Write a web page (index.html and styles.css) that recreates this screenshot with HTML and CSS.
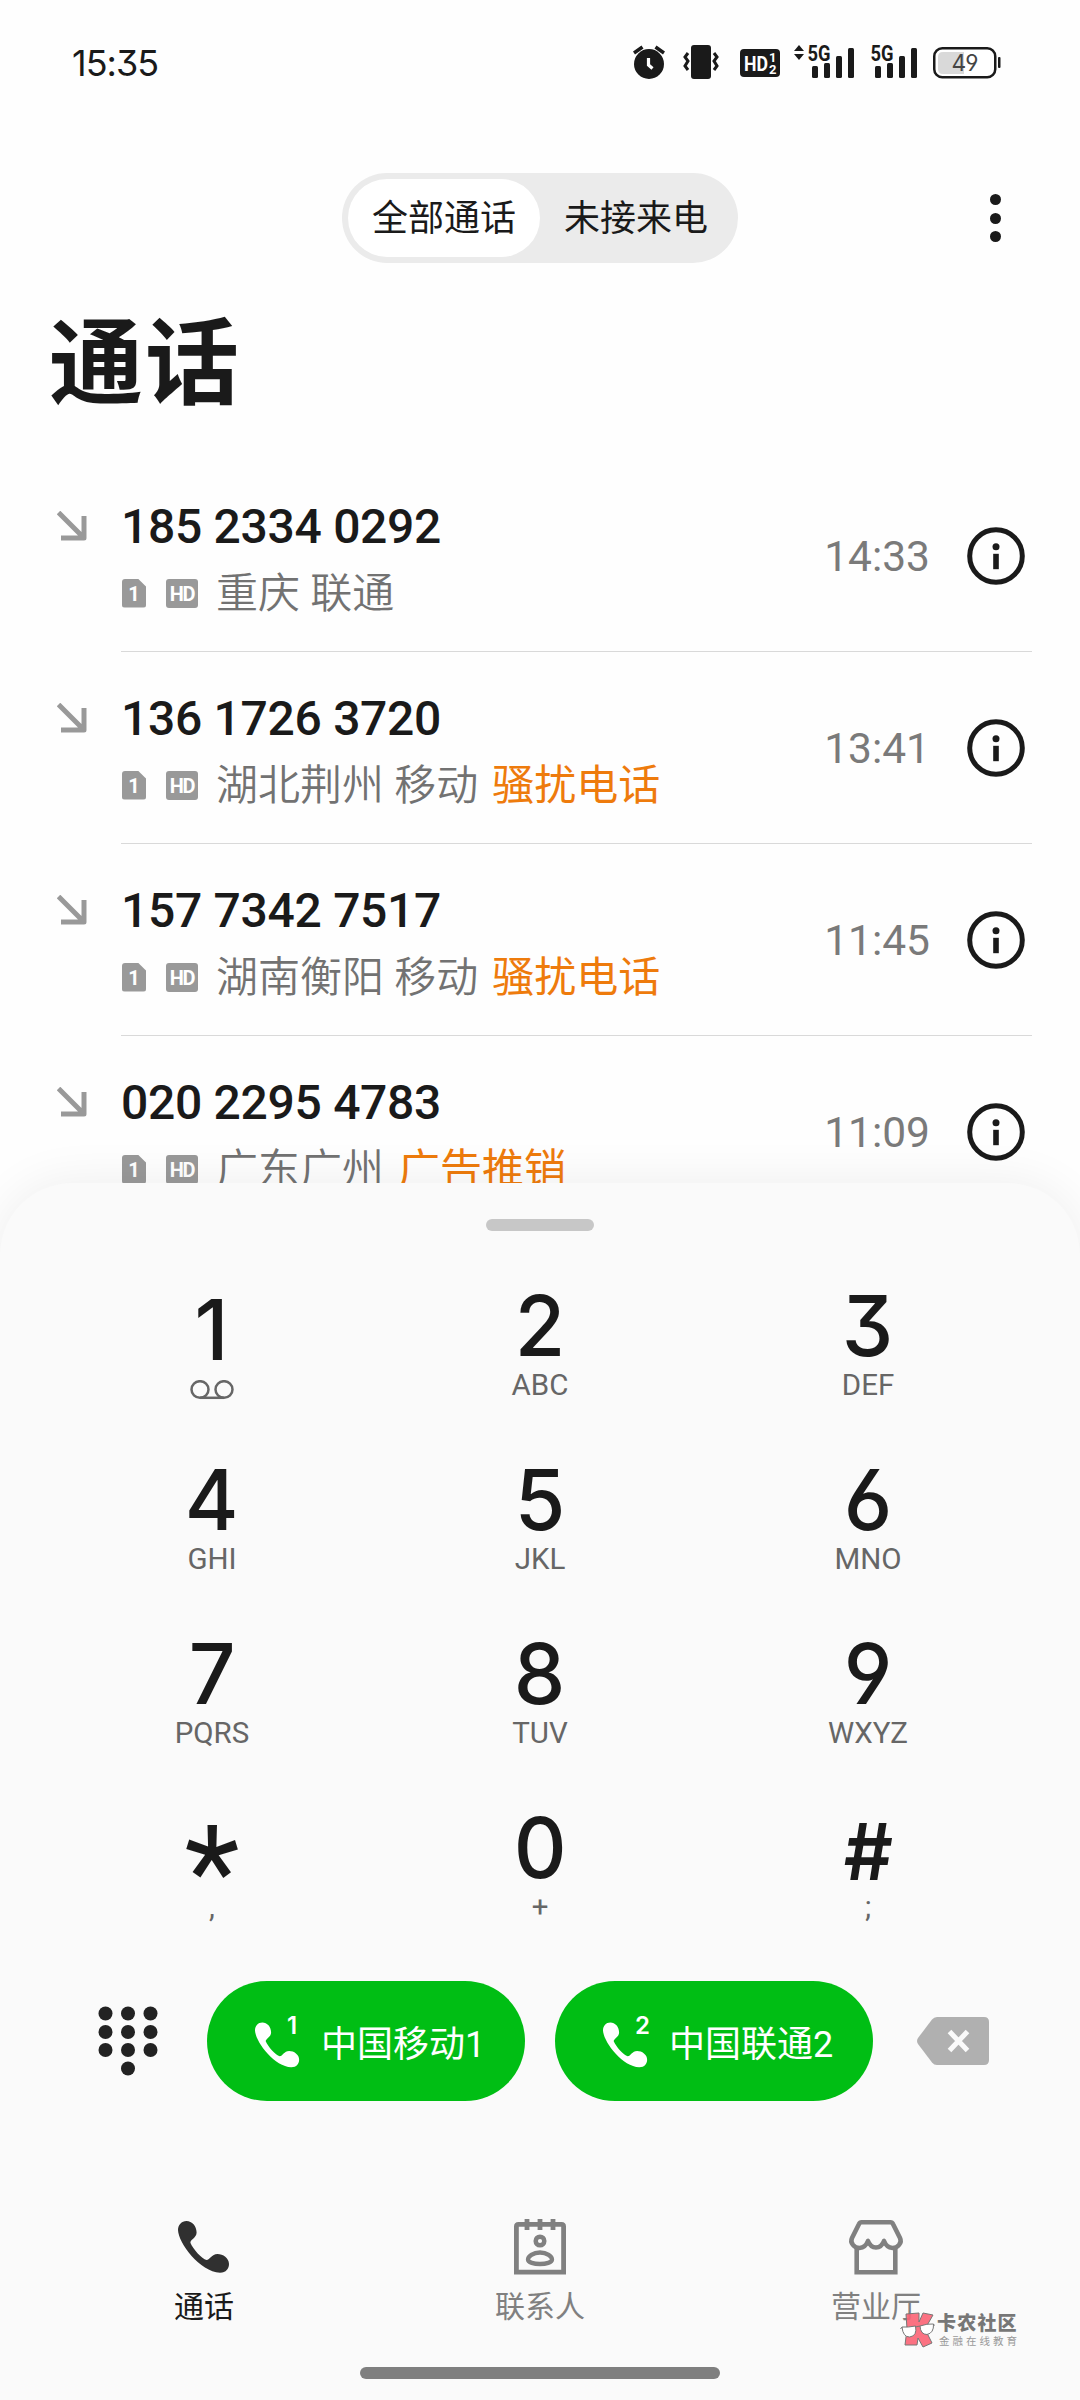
FILE: index.html
```html
<!DOCTYPE html>
<html lang="zh-CN">
<head>
    <meta charset="UTF-8">
    <meta name="viewport" content="width=device-width, initial-scale=1.0">
    <title>通话</title>
    <link rel="stylesheet" href="styles.css">
</head>
<body>
    <!-- Shared icons -->
    <svg width="0" height="0" class="defs">
        <symbol id="phone" viewBox="0 0 52 52">
            <path d="M8.500 0C3.500 0 0 4 0 9C.3 22 22 51 42 51.700C48 51.700 51 47.500 51 43C51 37 45 33 39.500 33C33.500 33 32 39 28.500 39C24 38 15 28 12.500 22C11.500 19 18.600 17 18.600 11.500C18.600 5 14 0 8.500 0Z"/>
        </symbol>
        <symbol id="incoming" viewBox="0 0 30 30">
            <path d="M1.500 1.500L26 26M27 5V27H4" fill="none" stroke="#999" stroke-width="5" stroke-linejoin="round"/>
        </symbol>
        <symbol id="info" viewBox="0 0 58 58">
            <circle cx="29" cy="29" r="26.300" fill="none" stroke="#1a1a1a" stroke-width="5"/>
            <circle cx="29" cy="19.800" r="3.500" fill="#1a1a1a"/>
            <rect x="26.200" y="26.800" width="5.600" height="15.400" fill="#1a1a1a"/>
        </symbol>
        <symbol id="bars" viewBox="0 0 46 34">
            <rect x="4" y="21" width="6" height="12" rx="1.500"/>
            <rect x="16" y="18" width="6" height="15" rx="1.500"/>
            <rect x="28" y="11" width="6" height="22" rx="1.500"/>
            <rect x="40" y="3" width="6" height="30" rx="1.500"/>
        </symbol>
    </svg>

    <div class="phone">
        <div class="status-bar">
            <span class="clock">15:35</span>
            <div class="status-icons">
                <svg class="alarm" width="32" height="34" viewBox="0 0 32 34">
                    <circle cx="16" cy="19" r="15"/>
                    <path d="M1 8L9.500 2M31 8L22.500 2" stroke="#1a1a1a" stroke-width="3.500"/>
                    <path d="M15.500 13V20L19.500 23.500" fill="none" stroke="#fff" stroke-width="3.200"/>
                </svg>
                <svg class="vibrate" width="36" height="34" viewBox="0 0 36 34">
                    <rect x="8" y="0" width="20" height="34" rx="3"/>
                    <path d="M5 8L2 12L5 16L2 21L5 25M31 8L34 12L31 16L34 21L31 25" fill="none" stroke="#1a1a1a" stroke-width="3"/>
                </svg>
                <svg class="volte" width="40" height="28" viewBox="0 0 40 28">
                    <rect width="40" height="28" rx="4"/>
                    <g fill="#fff" font-weight="700">
                        <text x="4" y="21.500" font-size="21" textLength="24" lengthAdjust="spacingAndGlyphs">HD</text>
                        <text x="29" y="13" font-size="13">1</text>
                        <text x="29" y="25" font-size="13">2</text>
                    </g>
                </svg>
                <svg class="updown" width="10" height="15" viewBox="0 0 10 15">
                    <path d="M0 6L5 0L10 6ZM0 9L5 15L10 9Z"/>
                </svg>
                <svg class="signal" width="46" height="34">
                    <text x="-0.500" y="16" font-size="22" font-weight="700" textLength="23" lengthAdjust="spacingAndGlyphs">5G</text>
                    <use href="#bars"/>
                </svg>
                <svg class="signal second" width="46" height="34">
                    <text x="-0.500" y="16" font-size="22" font-weight="700" textLength="23" lengthAdjust="spacingAndGlyphs">5G</text>
                    <use href="#bars"/>
                </svg>
                <svg class="battery" width="68" height="32" viewBox="0 0 68 32">
                    <rect x="1.250" y="1.250" width="61" height="29" rx="8" fill="#fff" stroke="#1a1a1a" stroke-width="2.500"/>
                    <path d="M10 5H31V27H10Q5 27 5 22V10Q5 5 10 5Z" fill="#d9d9d9"/>
                    <rect x="65" y="10" width="2.500" height="11" rx="1"/>
                    <text x="32" y="24" font-size="23" text-anchor="middle" textLength="27" lengthAdjust="spacingAndGlyphs" fill="#444">49</text>
                </svg>
            </div>
        </div>

        <div class="toolbar">
            <div class="tabs">
                <div class="tab active">全部通话</div>
                <div class="tab">未接来电</div>
            </div>
            <div class="more"><i></i><i></i><i></i></div>
        </div>

        <h1>通话</h1>

        <div class="calls">
            <div class="call">
                <svg class="direction" width="30" height="30"><use href="#incoming"/></svg>
                <div class="call-body">
                    <div class="call-text">
                        <div class="number">185 2334 0292</div>
                        <div class="place">
                            <span class="sim">1</span>
                            <span class="hd">HD</span>
                            <span>重庆 联通</span>
                        </div>
                    </div>
                    <span class="time">14:33</span>
                    <svg width="58" height="58"><use href="#info"/></svg>
                </div>
            </div>
            <div class="call">
                <svg class="direction" width="30" height="30"><use href="#incoming"/></svg>
                <div class="call-body">
                    <div class="call-text">
                        <div class="number">136 1726 3720</div>
                        <div class="place">
                            <span class="sim">1</span>
                            <span class="hd">HD</span>
                            <span>湖北荆州 移动</span>
                            <span class="warn">骚扰电话</span>
                        </div>
                    </div>
                    <span class="time">13:41</span>
                    <svg width="58" height="58"><use href="#info"/></svg>
                </div>
            </div>
            <div class="call">
                <svg class="direction" width="30" height="30"><use href="#incoming"/></svg>
                <div class="call-body">
                    <div class="call-text">
                        <div class="number">157 7342 7517</div>
                        <div class="place">
                            <span class="sim">1</span>
                            <span class="hd">HD</span>
                            <span>湖南衡阳 移动</span>
                            <span class="warn">骚扰电话</span>
                        </div>
                    </div>
                    <span class="time">11:45</span>
                    <svg width="58" height="58"><use href="#info"/></svg>
                </div>
            </div>
            <div class="call">
                <svg class="direction" width="30" height="30"><use href="#incoming"/></svg>
                <div class="call-body">
                    <div class="call-text">
                        <div class="number">020 2295 4783</div>
                        <div class="place">
                            <span class="sim">1</span>
                            <span class="hd">HD</span>
                            <span>广东广州</span>
                            <span class="warn">广告推销</span>
                        </div>
                    </div>
                    <span class="time">11:09</span>
                    <svg width="58" height="58"><use href="#info"/></svg>
                </div>
            </div>
        </div>

        <!-- Dial pad sheet over the list -->
        <div class="sheet">
            <div class="handle"></div>
            <div class="keypad">
                <div class="key one">
                    <b>1</b>
                    <svg width="44" height="20" viewBox="0 0 44 20" fill="none" stroke="#666" stroke-width="2.500">
                        <ellipse cx="10" cy="9.500" rx="8.500" ry="8.300"/>
                        <ellipse cx="34" cy="9.500" rx="8.500" ry="8.300"/>
                        <path d="M10 17.800H34"/>
                    </svg>
                </div>
                <div class="key"><b>2</b><span>ABC</span></div>
                <div class="key"><b>3</b><span>DEF</span></div>
                <div class="key"><b>4</b><span>GHI</span></div>
                <div class="key"><b>5</b><span>JKL</span></div>
                <div class="key"><b>6</b><span>MNO</span></div>
                <div class="key"><b>7</b><span>PQRS</span></div>
                <div class="key"><b>8</b><span>TUV</span></div>
                <div class="key"><b>9</b><span>WXYZ</span></div>
                <div class="key star"><b>*</b><span>,</span></div>
                <div class="key"><b>0</b><span>+</span></div>
                <div class="key hash"><b>#</b><span>;</span></div>
            </div>

            <div class="dial-row">
                <svg class="pad-icon" width="60" height="70" viewBox="0 0 60 70" fill="#222">
                    <circle cx="7.500" cy="7.500" r="7"/><circle cx="30" cy="7.500" r="7"/><circle cx="52.500" cy="7.500" r="7"/>
                    <circle cx="7.500" cy="26" r="7"/><circle cx="30" cy="26" r="7"/><circle cx="52.500" cy="26" r="7"/>
                    <circle cx="7.500" cy="44" r="7"/><circle cx="30" cy="44" r="7"/><circle cx="52.500" cy="44" r="7"/>
                    <circle cx="30" cy="62.500" r="7"/>
                </svg>
                <div class="dial">
                    <svg width="45" height="46"><use href="#phone"/></svg>
                    <sup>1</sup>
                    <span>中国移动1</span>
                </div>
                <div class="dial">
                    <svg width="45" height="46"><use href="#phone"/></svg>
                    <sup>2</sup>
                    <span>中国联通2</span>
                </div>
                <svg class="erase" width="72" height="48" viewBox="0 0 72 48">
                    <path d="M20 0H67Q72 0 72 5V43Q72 48 67 48H20Q17 48 15 45.500L1 27Q-1 24 1 21L15 2.500Q17 0 20 0Z" fill="#b0b0b0"/>
                    <path d="M32.500 14.500L50.500 33.500M50.500 14.500L32.500 33.500" stroke="#fafafa" stroke-width="5"/>
                </svg>
            </div>

            <div class="nav">
                <div class="nav-item active">
                    <svg width="58" height="58" viewBox="-3 -3 58 58"><use href="#phone" width="52" height="52"/></svg>
                    <span>通话</span>
                </div>
                <div class="nav-item">
                    <svg width="58" height="58" viewBox="0 0 58 58" fill="none" stroke="#808080" stroke-width="4.800">
                        <path d="M5.400 54.200V8.500Q5.400 6.400 7.500 6.400H50.500Q52.600 6.400 52.600 8.500V54.200Z"/>
                        <path d="M16 1V12M29 1V12M42 1V12"/>
                        <circle cx="29" cy="23" r="4.300" stroke-width="4.500"/>
                        <path d="M29 34.500C22 34.500 17 38.500 17 41.500C17 44.500 23 46 29 46S41 44.500 41 41.500C41 38.500 36 34.500 29 34.500Z" stroke-width="4.300"/>
                    </svg>
                    <span>联系人</span>
                </div>
                <div class="nav-item">
                    <svg width="58" height="58" viewBox="0 0 58 58" fill="none" stroke="#808080" stroke-width="4.600" stroke-linejoin="round">
                        <path d="M14.500 4.300H43.500Q45.200 4.300 46 6L53 20C55.500 25 50.500 30 45.500 30Q39.500 29.500 37 23Q34.500 29.500 29 29.500T21 23Q18.500 29.500 12.500 30C7.500 30 2.500 25 5 20L12 6Q12.800 4.300 14.500 4.300Z"/>
                        <path d="M9.700 29V54.300H48.300V29" stroke-linejoin="miter"/>
                    </svg>
                    <span>营业厅</span>
                </div>
            </div>
            <div class="home-bar"></div>
        </div>

        <div class="watermark">
            <svg width="36" height="36" viewBox="0 0 36 36">
                <path d="M6 2L19 1L19 10L23 1L33 3L25 17L32 31L23 35L18 26L17 33L5 33L7 17Z" fill="#fb6374" fill-opacity=".9" stroke="#777" stroke-width="1"/>
                <path d="M2 15Q8 15.500 15.500 14Q17.500 24 9.500 25Q3 25 2 15ZM20 14Q27 11.500 33.500 12Q34 21 27 22.500Q20.500 22.500 20 14Z" fill="#fff" stroke="#777" stroke-width="1"/>
                <path d="M15.500 15L20 14M2 15L.5 17M33.500 12L34.500 13.500" stroke="#777"/>
            </svg>
            <div>
                <strong>卡农社区</strong>
                <small>金融在线教育</small>
            </div>
        </div>
    </div>
</body>
</html>
```
FILE: styles.css
```css
* {
    box-sizing: border-box;
}
body {
    margin: 0;
    background: #fefefe;
    color: #1a1a1a;
    font-family: Roboto, "Noto Sans CJK SC", sans-serif;
}
svg {
    display: block;
    flex-shrink: 0;
}
.defs {
    position: absolute;
}
.phone {
    position: relative;
    width: 1080px;
    height: 2400px;
    overflow: hidden;
}

/* Status bar */
.status-bar {
    display: flex;
    justify-content: space-between;
    height: 173px;
    padding: 45px 79px 0 72px;
    fill: #1a1a1a;
}
.clock {
    height: 36px;
    line-height: 36px;
    font-family: Inter, sans-serif;
    font-size: 36px;
    font-feature-settings: "cv09";
    letter-spacing: -1px;
}
.status-icons {
    display: flex;
    align-items: flex-start;
}
.vibrate {
    margin-left: 18px;
}
.volte {
    margin: 4px 0 0 21px;
}
.updown {
    margin-left: 14px;
}
.signal {
    margin-left: 4px;
    overflow: visible;
}
.signal.second {
    margin-left: 17px;
}
.battery {
    margin: 2px 0 0 16px;
    font-family: Inter, sans-serif;
    font-feature-settings: "cv04";
}

/* Tabs */
.toolbar {
    display: flex;
    align-items: center;
    justify-content: space-between;
    height: 90px;
    padding: 0 78px 0 342px;
}
.tabs {
    display: flex;
    width: 396px;
    height: 90px;
    padding: 6px;
    border-radius: 45px;
    background: #ebebeb;
}
.tab {
    width: 192px;
    padding-top: 1px;
    border-radius: 39px;
    line-height: 78px;
    font-size: 36px;
    text-align: center;
}
.tab.active {
    background: #fff;
}
.more {
    display: flex;
    flex-direction: column;
    gap: 7.500px;
    width: 12px;
}
.more i {
    width: 11px;
    height: 11px;
    border-radius: 50%;
    background: #1a1a1a;
}
h1 {
    height: 197px;
    margin: 0;
    padding: 32px 0 0 49px;
    line-height: 140px;
    font-size: 94px;
    font-weight: 700;
    letter-spacing: 2px;
}

/* Call log */
.call {
    display: flex;
    height: 192px;
    padding: 0 48px 0 57px;
}
.direction {
    margin: 51px 34px 0 0;
}
.call-body {
    display: flex;
    align-items: center;
    flex: 1;
    padding: 0 7px 0 0;
    border-bottom: 1px solid #d9d9d9;
}
.call-text {
    flex: 1;
    align-self: flex-start;
    padding-top: 37px;
}
.number {
    line-height: 60px;
    font-size: 48px;
    font-weight: 500;
    letter-spacing: -0.300px;
}
.place {
    display: flex;
    align-items: center;
    height: 64px;
    margin-top: 5px;
    line-height: 64px;
    color: #727272;
    font-size: 42px;
    font-weight: 350;
    white-space: nowrap;
}
.place .sim,
.place .hd {
    height: 29px;
    margin: -2px 0 0 1px;
    background: #999;
    color: #fff;
    line-height: 30px;
    font-size: 20px;
    font-weight: 700;
    text-align: center;
}
.place .sim {
    width: 24px;
    border-radius: 3px;
    clip-path: polygon(0 0, 66% 0, 100% 28%, 100% 100%, 0 100%);
}
.place .hd {
    width: 32px;
    margin: -2px 18px 0 20px;
    border-radius: 3px;
    letter-spacing: -1.200px;
}
.place .warn {
    margin-left: 14px;
    color: #ee7b0c;
    font-weight: 400;
}
.time {
    margin: 2px 37px 0 0;
    color: #7a7a7a;
    font-size: 42.500px;
}

/* Dial pad */
.sheet {
    position: absolute;
    left: 0;
    right: 0;
    bottom: 0;
    height: 1217px;
    padding-top: 36px;
    border-radius: 72px 72px 0 0;
    background: #fafafa;
    box-shadow: 0 0 50px rgba(0, 0, 0, 0.070);
}
.handle {
    width: 108px;
    height: 12px;
    margin: 0 auto 32px;
    border-radius: 6px;
    background: #c7c7c7;
}
.keypad {
    display: grid;
    grid-template-columns: repeat(3, 328px);
    grid-auto-rows: 174px;
    margin-left: 48px;
}
.key {
    display: flex;
    flex-direction: column;
    align-items: center;
    padding-top: 25px;
}
.key b {
    height: 74px;
    line-height: 74px;
    font-family: Inter, sans-serif;
    font-size: 84.500px;
    font-weight: 500;
    font-feature-settings: "cv03", "cv04", "cv09";
    transform: scaleX(0.970);
}
.key span {
    margin-top: 8px;
    line-height: 30px;
    color: #666;
    font-size: 29.500px;
}
.key.one {
    padding-top: 29px;
}
.key.one svg {
    margin-top: 14px;
}
.key.star b {
    padding-top: 25px;
    font-family: Roboto, sans-serif;
    font-size: 128px;
    font-weight: 400;
    transform: none;
}
.key.hash b {
    padding-top: 4px;
    font-size: 79px;
    font-weight: 600;
}

/* Call buttons */
.dial-row {
    display: flex;
    align-items: center;
    height: 120px;
    margin-top: 22px;
    padding-left: 98px;
}
.pad-icon {
    margin-right: 19px;
}
.dial {
    position: relative;
    display: flex;
    align-items: center;
    width: 318px;
    height: 120px;
    margin-left: 30px;
    padding-left: 48px;
    border-radius: 60px;
    background: #00be14;
    color: #fff;
    fill: #fff;
}
.dial svg {
    margin-top: 7px;
}
.dial sup {
    position: absolute;
    left: 80px;
    top: 33px;
    line-height: 24px;
    font-family: Inter, sans-serif;
    font-size: 24px;
    font-weight: 600;
}
.dial span {
    margin-left: 21px;
    font-size: 36px;
    font-weight: 400;
    white-space: nowrap;
}
.erase {
    margin-left: 44px;
}

/* Bottom navigation */
.nav {
    display: grid;
    grid-template-columns: repeat(3, 336px);
    margin: 117px 0 0 36px;
}
.nav-item {
    display: flex;
    flex-direction: column;
    align-items: center;
    color: #808080;
    font-size: 30px;
}
.nav-item span {
    margin-top: 10px;
    line-height: 42px;
}
.nav-item.active {
    color: #1a1a1a;
    fill: #303030;
}
.home-bar {
    width: 360px;
    height: 12px;
    margin: 39px auto 0;
    border-radius: 6px;
    background: #7f7f7f;
}

.watermark {
    position: absolute;
    left: 900px;
    top: 2312px;
    display: flex;
    color: #777;
}
.watermark strong,
.watermark small {
    display: block;
    white-space: nowrap;
}
.watermark strong {
    margin-left: 1px;
    line-height: 24px;
    font-size: 19px;
    font-weight: 900;
    letter-spacing: 1.200px;
}
.watermark small {
    margin-left: 3px;
    line-height: 11px;
    color: #999;
    font-size: 10.500px;
    letter-spacing: 3px;
}
```
